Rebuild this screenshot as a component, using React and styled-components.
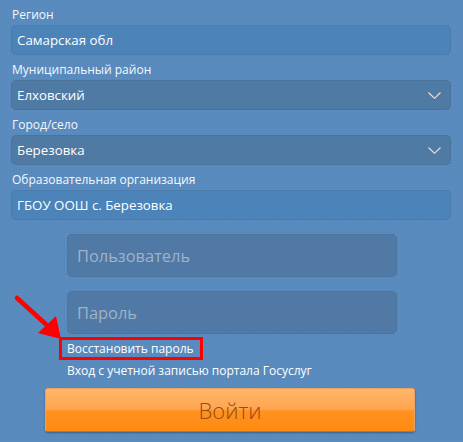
import React from "react"
import styled, { createGlobalStyle } from "styled-components"

const GlobalStyle = createGlobalStyle`
  html, body {
    margin: 0;
    padding: 0;
    background: #5a8bbe;
  }
  body {
    font-family: "Open Sans", "Noto Sans", sans-serif;
  }
`

const Page = styled.div`
  position: relative;
  width: 463px;
  height: 442px;
  overflow: hidden;
  background-color: #5a8bbe;
  background-image: radial-gradient(rgba(0, 0, 0, 0.04) 1px, transparent 1px);
  background-size: 3px 3px;
  box-sizing: border-box;
  padding: 7px 12px 0 11px;
`

const Group = styled.div`
  display: flex;
  flex-direction: column;
  margin-bottom: 7px;
`

const Label = styled.label`
  font-size: 12px;
  color: #f4f8fc;
  line-height: 15px;
  margin-bottom: 3px;
  padding-left: 1px;
`

const Field = styled.div`
  display: flex;
  align-items: center;
  justify-content: space-between;
  height: 30px;
  box-sizing: border-box;
  padding: 0 10px 0 6px;
  border-radius: 5px;
  background: ${p => (p.$select ? "#4f7aa4" : "#4c83b9")};
  box-shadow: inset 0 0 0 1px rgba(0, 0, 0, 0.05);
  color: #ffffff;
  font-size: 13.3px;
`

const Chevron = () => (
  <svg width="13" height="7" viewBox="0 0 13 7">
    <path d="M0.5 0.5 L6.5 6.3 L12.5 0.5" fill="none" stroke="#f5e4d8" strokeWidth="1.1" />
  </svg>
)

// margin collapses with the last group's margin-bottom
const Login = styled.div`
  display: flex;
  flex-direction: column;
  gap: 14px;
  margin: 14px 0 0 56px;
  width: 330px;
`

const Input = styled.div`
  height: 43px;
  box-sizing: border-box;
  padding: 0 10px;
  display: flex;
  align-items: center;
  border-radius: 5px;
  background: #5079a5;
  box-shadow: inset 0 0 0 1px rgba(0, 0, 0, 0.04);
  color: #9fb3c8;
  font-size: 16.4px;
`

const Links = styled.div`
  display: flex;
  flex-direction: column;
  align-items: flex-start;
  margin: 3px 0 0 48px;
`

const Highlight = styled.div`
  border: 3px solid #ff0000;
  padding: 1px 6px 1px 5px;
  font-size: 12px;
  color: #ffffff;
  line-height: 15px;
`

const PlainLink = styled.div`
  font-size: 12px;
  color: #ffffff;
  line-height: 15px;
  margin: 3px 0 0 8px;
`

const Button = styled.button`
  display: block;
  margin: 10px 0 0 34px;
  width: 370px;
  height: 44px;
  border: 1px solid #e9a461;
  border-bottom-color: #c97219;
  border-radius: 3px;
  background: linear-gradient(
    to bottom,
    #ffb66a 0%,
    #ffa550 48%,
    #ff9220 52%,
    #ff8a10 100%
  );
  box-shadow: 0 1px 2px rgba(20, 40, 80, 0.45);
  font-family: "Open Sans", "Noto Sans", sans-serif;
  font-size: 22px;
  font-weight: 300;
  color: #9a4a14;
  padding: 0;
`

const Arrow = styled.svg`
  position: absolute;
  left: 12px;
  top: 294px;
`

const fields = [
  { label: "Регион", value: "Самарская обл" },
  { label: "Муниципальный район", value: "Елховский", select: true },
  { label: "Город/село", value: "Березовка", select: true },
  { label: "Образовательная организация", value: "ГБОУ ООШ с. Березовка" },
]

export default function App() {
  return (
    <Page>
      <GlobalStyle />
      {fields.map(f => (
        <Group key={f.label}>
          <Label>{f.label}</Label>
          <Field $select={f.select}>
            <span>{f.value}</span>
            {f.select && <Chevron />}
          </Field>
        </Group>
      ))}
      <Login>
        <Input>Пользователь</Input>
        <Input>Пароль</Input>
      </Login>
      <Links>
        <Highlight>Восстановить пароль</Highlight>
        <PlainLink>Вход с учетной записью портала Госуслуг</PlainLink>
      </Links>
      <Button>Войти</Button>
      <Arrow width="56" height="50" viewBox="0 0 56 50">
        <path d="M5 4 L38 34" stroke="#ff0000" strokeWidth="4.5" strokeLinecap="round" />
        <polygon points="49,45 26,39 44,22" fill="#ff0000" />
      </Arrow>
    </Page>
  )
}
